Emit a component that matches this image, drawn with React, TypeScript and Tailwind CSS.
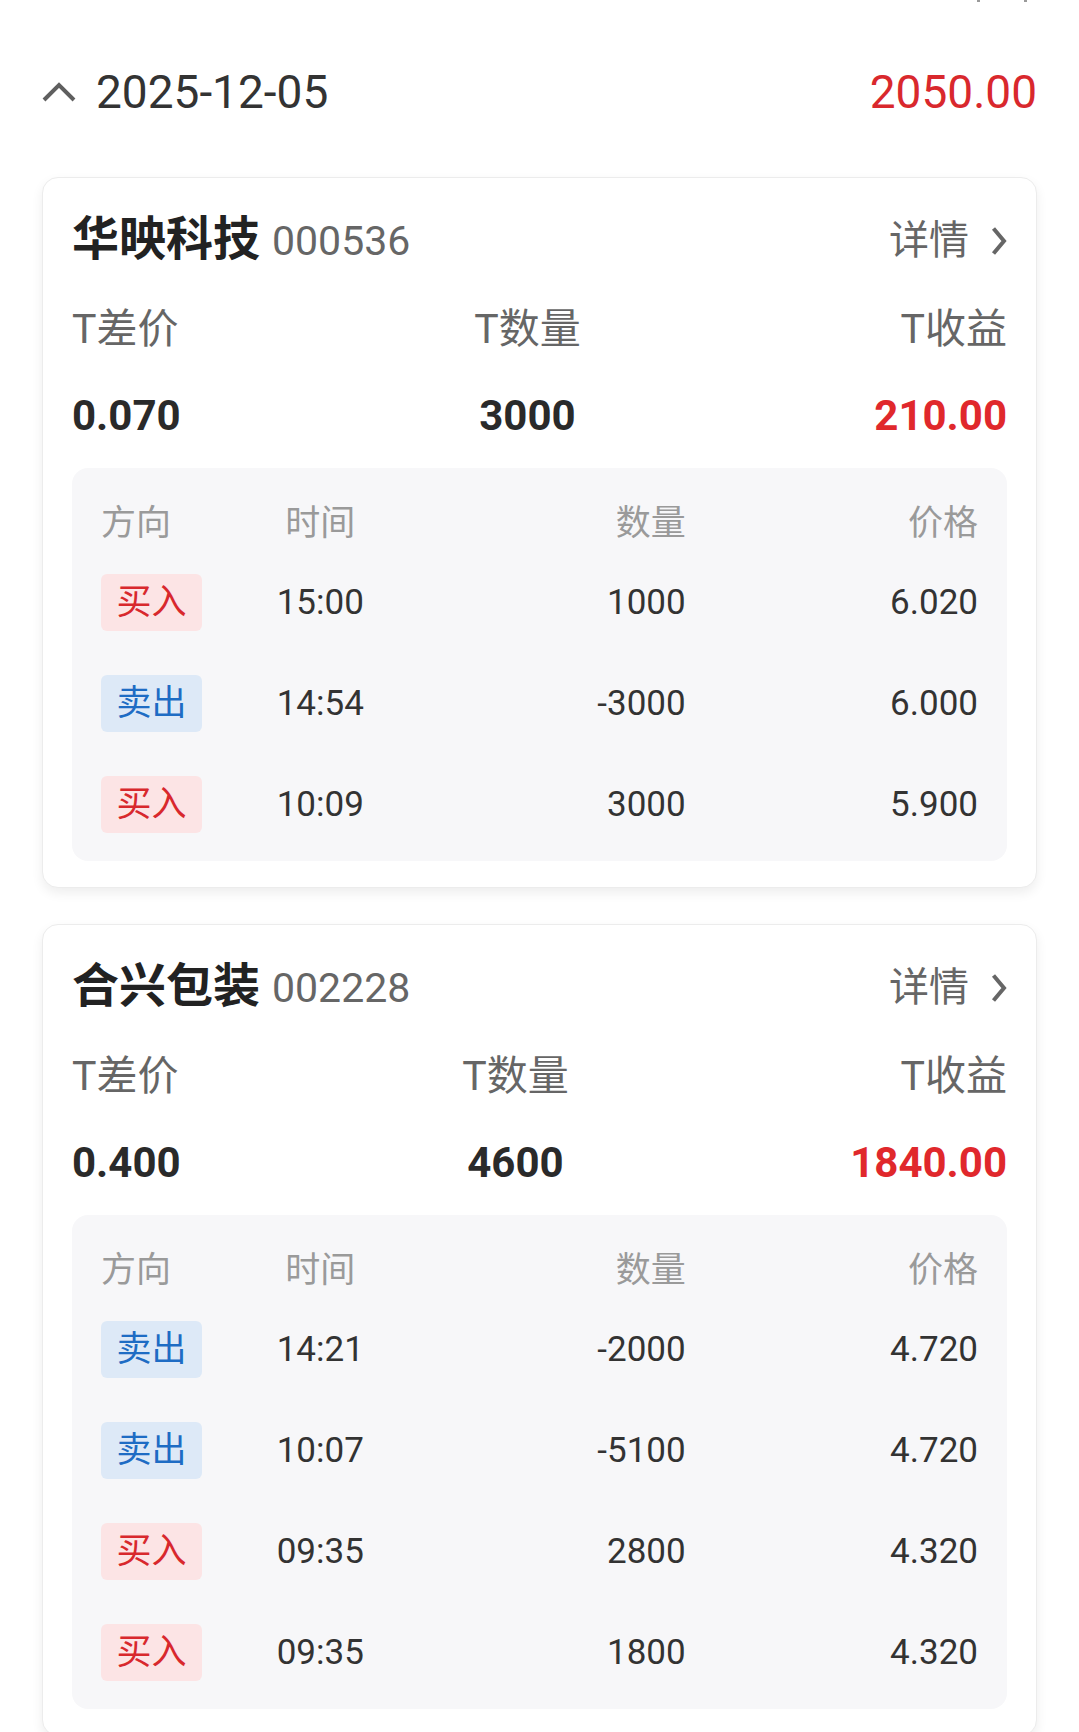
import React from "react";

type Trade = { dir: "buy" | "sell"; time: string; qty: string; price: string };
type Stock = {
  name: string;
  code: string;
  diff: string;
  count: string;
  profit: string;
  trades: Trade[];
};

const stocks: Stock[] = [
  {
    name: "华映科技",
    code: "000536",
    diff: "0.070",
    count: "3000",
    profit: "210.00",
    trades: [
      { dir: "buy", time: "15:00", qty: "1000", price: "6.020" },
      { dir: "sell", time: "14:54", qty: "-3000", price: "6.000" },
      { dir: "buy", time: "10:09", qty: "3000", price: "5.900" },
    ],
  },
  {
    name: "合兴包装",
    code: "002228",
    diff: "0.400",
    count: "4600",
    profit: "1840.00",
    trades: [
      { dir: "sell", time: "14:21", qty: "-2000", price: "4.720" },
      { dir: "sell", time: "10:07", qty: "-5100", price: "4.720" },
      { dir: "buy", time: "09:35", qty: "2800", price: "4.320" },
      { dir: "buy", time: "09:35", qty: "1800", price: "4.320" },
    ],
  },
];

const font = { fontFamily: '"Roboto", "Noto Sans CJK SC", sans-serif' };

function ChevronRight() {
  return (
    <svg width="16" height="30" viewBox="0 0 16 30" fill="none">
      <path d="M2.5 2.5 L13 15 L2.5 27.5" stroke="#666666" strokeWidth="4" strokeLinejoin="miter" />
    </svg>
  );
}

function ChevronUp() {
  return (
    <svg width="34" height="22" viewBox="0 0 34 22" fill="none">
      <path d="M2 19 L17 4 L32 19" stroke="#5f5f5f" strokeWidth="4" strokeLinejoin="miter" />
    </svg>
  );
}

function Badge({ dir }: { dir: "buy" | "sell" }) {
  return dir === "buy" ? (
    <div className="w-[101px] h-[57px] rounded-[6px] bg-[#fce4e5] text-[#d8282d] flex items-center justify-center text-[35px] leading-none">
      买入
    </div>
  ) : (
    <div className="w-[101px] h-[57px] rounded-[6px] bg-[#dde9f7] text-[#1e6cc4] flex items-center justify-center text-[35px] leading-none">
      卖出
    </div>
  );
}

function StockCard({ s }: { s: Stock }) {
  return (
    <div className="rounded-[16px] border border-[#ececec] bg-white shadow-[0_5px_12px_rgba(0,0,0,0.07)] px-[29px] pt-[30px] pb-[26px]">
      <div className="h-[60px] flex items-center justify-between">
        <div className="flex items-baseline">
          <span className="text-[47px] font-bold text-[#222222] leading-none">{s.name}</span>
          <span className="ml-[12px] text-[41px] text-[#666666] leading-none">{s.code}</span>
        </div>
        <div className="flex items-center pt-[5px]">
          <span className="text-[40px] text-[#666666] leading-none">详情</span>
          <span className="ml-[22px] flex items-center">
            <ChevronRight />
          </span>
        </div>
      </div>
      <div className="mt-[36px] flex justify-between">
        <div className="flex flex-col items-start">
          <div className="h-[50px] flex items-center text-[41px] text-[#666666] leading-none">T差价</div>
          <div className="mt-[37px] h-[50px] flex items-center text-[42px] font-bold text-[#2a2a2a] leading-none">{s.diff}</div>
        </div>
        <div className="flex flex-col items-center">
          <div className="h-[50px] flex items-center text-[41px] text-[#666666] leading-none">T数量</div>
          <div className="mt-[37px] h-[50px] flex items-center text-[42px] font-bold text-[#2a2a2a] leading-none">{s.count}</div>
        </div>
        <div className="flex flex-col items-end">
          <div className="h-[50px] flex items-center text-[41px] text-[#666666] leading-none">T收益</div>
          <div className="mt-[37px] h-[50px] flex items-center text-[42px] font-bold text-[#e0282c] leading-none">{s.profit}</div>
        </div>
      </div>
      <div className="mt-[27px] rounded-[16px] bg-[#f7f7f9] px-[29px] pt-[27px] pb-[28px]">
        <div className="grid grid-cols-[1fr_1fr_2fr_2fr] h-[56px] items-center text-[35px] text-[#9a9a9a] leading-none">
          <div className="justify-self-start">方向</div>
          <div className="justify-self-center">时间</div>
          <div className="justify-self-end">数量</div>
          <div className="justify-self-end">价格</div>
        </div>
        <div className="mt-[23px] flex flex-col gap-[44px]">
          {s.trades.map((t, i) => (
            <div key={i} className="grid grid-cols-[1fr_1fr_2fr_2fr] h-[57px] items-center text-[35px] text-[#333333] leading-none">
              <div className="justify-self-start">
                <Badge dir={t.dir} />
              </div>
              <div className="justify-self-center">{t.time}</div>
              <div className="justify-self-end">{t.qty}</div>
              <div className="justify-self-end">{t.price}</div>
            </div>
          ))}
        </div>
      </div>
    </div>
  );
}

export default function App() {
  return (
    <div className="w-[1079px] h-[1732px] overflow-hidden bg-white" style={font}>
      <div className="h-[3px] flex">
        <span className="ml-[977px] w-[3px] h-[2px] bg-[#9a9a9a]" />
        <span className="ml-[44px] w-[3px] h-[2px] bg-[#9a9a9a]" />
      </div>
      <div className="px-[42px] pt-[59px]">
        <div className="h-[60px] flex items-center justify-between">
          <div className="flex items-center">
            <ChevronUp />
            <span className="ml-[20px] text-[46px] text-[#333333] leading-none">2025-12-05</span>
          </div>
          <span className="text-[46px] text-[#d9282d] leading-none">2050.00</span>
        </div>
      </div>
      <div className="px-[42px] mt-[55px] flex flex-col gap-[36px]">
        {stocks.map((s) => (
          <StockCard key={s.code} s={s} />
        ))}
      </div>
    </div>
  );
}
